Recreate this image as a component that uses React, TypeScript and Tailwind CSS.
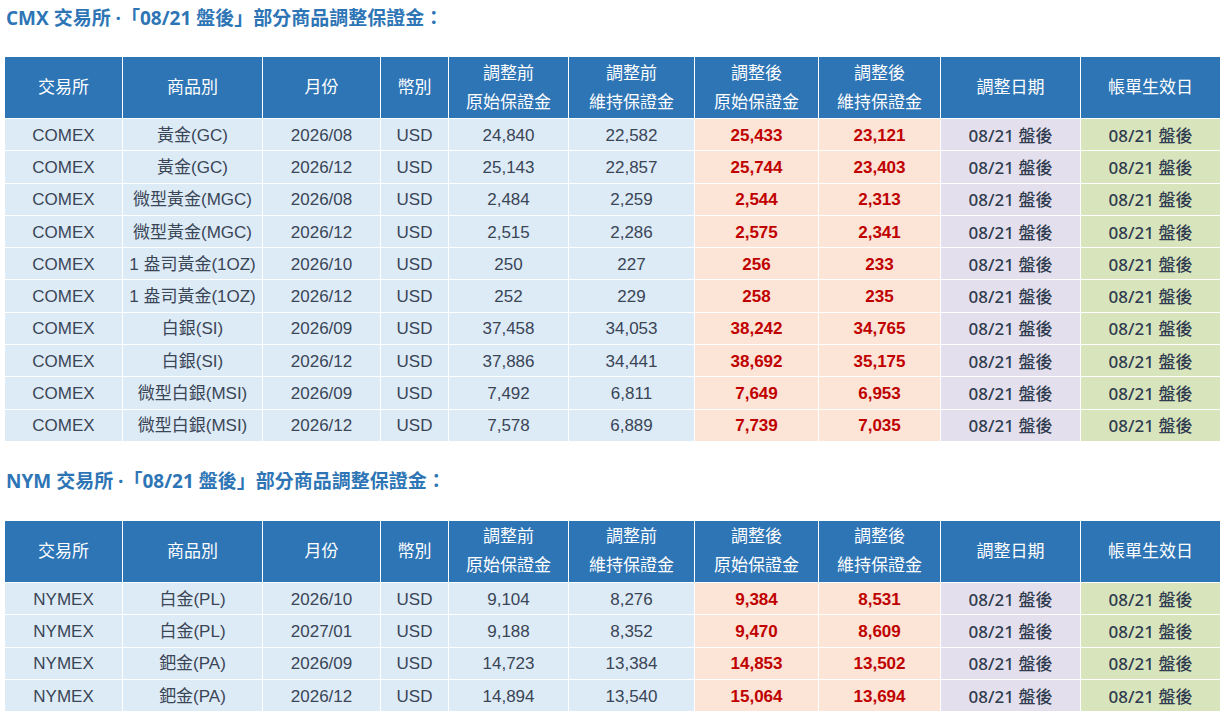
import * as React from "react";

type Row = {
  ex: string;
  item: string;
  month: string;
  preInit: string;
  preMaint: string;
  postInit: string;
  postMaint: string;
};

const cmx: Row[] = [
  { ex: "COMEX", item: "黃金(GC)", month: "2026/08", preInit: "24,840", preMaint: "22,582", postInit: "25,433", postMaint: "23,121" },
  { ex: "COMEX", item: "黃金(GC)", month: "2026/12", preInit: "25,143", preMaint: "22,857", postInit: "25,744", postMaint: "23,403" },
  { ex: "COMEX", item: "微型黃金(MGC)", month: "2026/08", preInit: "2,484", preMaint: "2,259", postInit: "2,544", postMaint: "2,313" },
  { ex: "COMEX", item: "微型黃金(MGC)", month: "2026/12", preInit: "2,515", preMaint: "2,286", postInit: "2,575", postMaint: "2,341" },
  { ex: "COMEX", item: "1 盎司黃金(1OZ)", month: "2026/10", preInit: "250", preMaint: "227", postInit: "256", postMaint: "233" },
  { ex: "COMEX", item: "1 盎司黃金(1OZ)", month: "2026/12", preInit: "252", preMaint: "229", postInit: "258", postMaint: "235" },
  { ex: "COMEX", item: "白銀(SI)", month: "2026/09", preInit: "37,458", preMaint: "34,053", postInit: "38,242", postMaint: "34,765" },
  { ex: "COMEX", item: "白銀(SI)", month: "2026/12", preInit: "37,886", preMaint: "34,441", postInit: "38,692", postMaint: "35,175" },
  { ex: "COMEX", item: "微型白銀(MSI)", month: "2026/09", preInit: "7,492", preMaint: "6,811", postInit: "7,649", postMaint: "6,953" },
  { ex: "COMEX", item: "微型白銀(MSI)", month: "2026/12", preInit: "7,578", preMaint: "6,889", postInit: "7,739", postMaint: "7,035" },
];

const nym: Row[] = [
  { ex: "NYMEX", item: "白金(PL)", month: "2026/10", preInit: "9,104", preMaint: "8,276", postInit: "9,384", postMaint: "8,531" },
  { ex: "NYMEX", item: "白金(PL)", month: "2027/01", preInit: "9,188", preMaint: "8,352", postInit: "9,470", postMaint: "8,609" },
  { ex: "NYMEX", item: "鈀金(PA)", month: "2026/09", preInit: "14,723", preMaint: "13,384", postInit: "14,853", postMaint: "13,502" },
  { ex: "NYMEX", item: "鈀金(PA)", month: "2026/12", preInit: "14,894", preMaint: "13,540", postInit: "15,064", postMaint: "13,694" },
];

const widths = [118, 140, 118, 68, 120, 126, 124, 122, 140, 140];

const sans = "font-['Liberation_Sans','Noto_Sans_CJK_TC',sans-serif]";

function Title({ ex }: { ex: string }) {
  return (
    <h2 className="pl-[6px] text-[19px] leading-[24px] font-bold text-[#2e75b6] [text-spacing-trim:space-all] font-['Open_Sans','Noto_Sans_CJK_TC',sans-serif]">
      {ex} 交易所 ·「08/21 盤後」部分商品調整保證金：
    </h2>
  );
}

function MarginTable({ rows }: { rows: Row[] }) {
  const th = "border border-white bg-[#2e75b6] text-white font-normal text-[17px] leading-[29px]";
  const td = "border border-white h-[32.3px] p-0 pt-[2px] text-[17px] leading-[20px] text-center";
  const date = "text-[17px] font-medium text-[#2f3b4f] font-['Noto_Sans','Noto_Sans_CJK_TC',sans-serif]";
  return (
    <table className={`ml-[4px] table-fixed border-collapse w-[1216px] ${sans}`}>
      <colgroup>
        {widths.map((w, i) => (
          <col key={i} style={{ width: w }} />
        ))}
      </colgroup>
      <thead>
        <tr className="h-[62px]">
          <th className={th}>交易所</th>
          <th className={th}>商品別</th>
          <th className={th}>月份</th>
          <th className={th}>幣別</th>
          <th className={th}>調整前<br />原始保證金</th>
          <th className={th}>調整前<br />維持保證金</th>
          <th className={th}>調整後<br />原始保證金</th>
          <th className={th}>調整後<br />維持保證金</th>
          <th className={th}>調整日期</th>
          <th className={th}>帳單生效日</th>
        </tr>
      </thead>
      <tbody className="text-[#3a4556]">
        {rows.map((r, i) => (
          <tr key={i}>
            <td className={`${td} bg-[#ddebf7]`}>{r.ex}</td>
            <td className={`${td} bg-[#ddebf7]`}>{r.item}</td>
            <td className={`${td} bg-[#ddebf7]`}>{r.month}</td>
            <td className={`${td} bg-[#ddebf7]`}>USD</td>
            <td className={`${td} bg-[#ddebf7]`}>{r.preInit}</td>
            <td className={`${td} bg-[#ddebf7]`}>{r.preMaint}</td>
            <td className={`${td} bg-[#fce4d6] font-bold text-[#c00000]`}>{r.postInit}</td>
            <td className={`${td} bg-[#fce4d6] font-bold text-[#c00000]`}>{r.postMaint}</td>
            <td className={`${td} ${date} bg-[#e4dfec]`}>08/21 盤後</td>
            <td className={`${td} ${date} bg-[#d8e4bc]`}>08/21 盤後</td>
          </tr>
        ))}
      </tbody>
    </table>
  );
}

export default function App() {
  return (
    <div className="w-[1227px] h-[716px] bg-white overflow-hidden pt-[6px]">
      <Title ex="CMX" />
      <div className="mt-[26px]">
        <MarginTable rows={cmx} />
      </div>
      <div className="mt-[27px]">
        <Title ex="NYM" />
      </div>
      <div className="mt-[27px]">
        <MarginTable rows={nym} />
      </div>
    </div>
  );
}
